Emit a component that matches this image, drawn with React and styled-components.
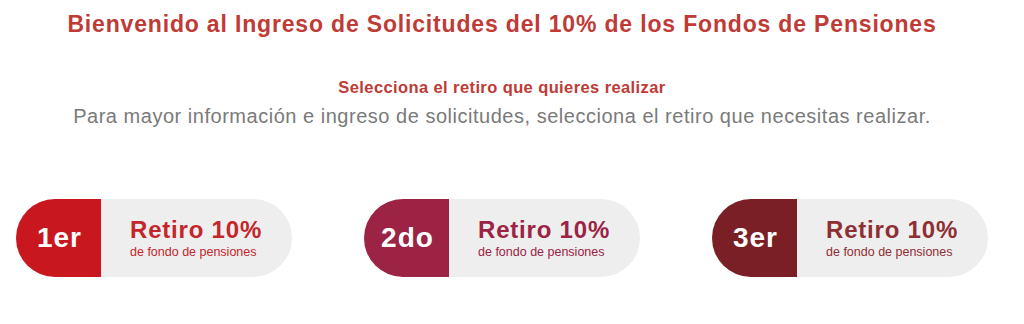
import React from 'react';
import styled, { createGlobalStyle } from 'styled-components';

const GlobalStyle = createGlobalStyle`
    body{
        margin:0;
        background:#ffffff;
        font-family: 'Liberation Sans', Arial, sans-serif;
    }
`;

const retiros = [
    { label: '1er', color: '#c8171e', text: '#c4262b' },
    { label: '2do', color: '#9c2344', text: '#9c2344' },
    { label: '3er', color: '#7b1f26', text: '#8e2f34' },
];

const App = () => {
    return (
        <Page>
            <GlobalStyle />
            <Header>
                <Title>Bienvenido al Ingreso de Solicitudes del 10% de los Fondos de Pensiones</Title>
                <Subtitle>Selecciona el retiro que quieres realizar</Subtitle>
                <Info>Para mayor información e ingreso de solicitudes, selecciona el retiro que necesitas realizar.</Info>
            </Header>
            <CardRow>
                {retiros.map((r) => (
                    <Card key={r.label}>
                        <Badge color={r.color}>{r.label}</Badge>
                        <CardBody color={r.text}>
                            <CardTitle>Retiro 10%</CardTitle>
                            <CardCaption>de fondo de pensiones</CardCaption>
                        </CardBody>
                    </Card>
                ))}
            </CardRow>
        </Page>
    );
};

const Page = styled.main`
    width:1024px;
    height:324px;
    display:flex;
    flex-direction:column;
    padding-top:10px;
    box-sizing:border-box;
`;
const Header = styled.header`
    display:flex;
    flex-direction:column;
    align-items:center;
    padding-right:20px;
`;
const Title = styled.h1`
    margin:0;
    font-size:23px;
    line-height:28px;
    font-weight:700;
    letter-spacing:0.83px;
    color:#c03a36;
`;
const Subtitle = styled.h2`
    margin:39px 0 0 0;
    font-size:16.5px;
    line-height:20px;
    font-weight:700;
    letter-spacing:0.4px;
    color:#c03a36;
`;
const Info = styled.p`
    margin:6px 0 0 0;
    font-size:20px;
    line-height:26px;
    font-weight:400;
    letter-spacing:0.52px;
    color:#7a7a7a;
`;
const CardRow = styled.div`
    display:flex;
    gap:72px;
    padding-left:16px;
    margin-top:70px;
`;
const Card = styled.div`
    width:276px;
    height:78px;
    display:flex;
    border-radius:39px;
    overflow:hidden;
    background:#eeeeee;
`;
const Badge = styled.div`
    width:85px;
    flex-shrink:0;
    display:flex;
    align-items:center;
    justify-content:center;
    background:${props => props.color};
    color:#ffffff;
    font-size:28px;
    font-weight:700;
    letter-spacing:1px;
    padding-left:2px;
    box-sizing:border-box;
`;
const CardBody = styled.div`
    flex:1;
    display:flex;
    flex-direction:column;
    justify-content:center;
    padding-left:29px;
    color:${props => props.color};
`;
const CardTitle = styled.span`
    font-size:24px;
    line-height:26px;
    font-weight:700;
    letter-spacing:0.8px;
`;
const CardCaption = styled.span`
    font-size:12.5px;
    line-height:16px;
    margin-top:1px;
`;

export default App;
